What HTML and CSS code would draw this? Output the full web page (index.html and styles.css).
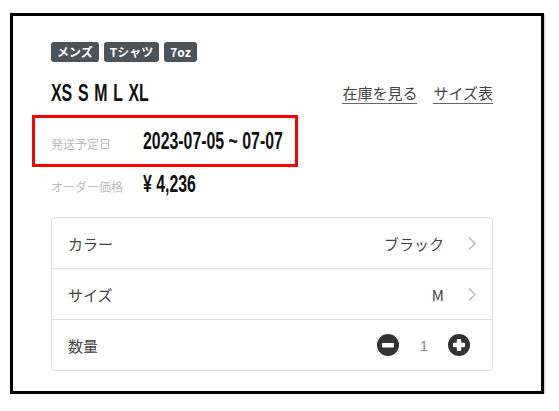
FILE: index.html
```html
<!DOCTYPE html>
<html lang="ja">
<head>
<meta charset="UTF-8">
<meta name="viewport" content="width=device-width, initial-scale=1.0">
<title>商品詳細</title>
<link rel="stylesheet" href="styles.css">
</head>
<body>
    <div class="card">
        <div class="tags">
            <span class="tag">メンズ</span>
            <span class="tag">Tシャツ</span>
            <span class="tag">7oz</span>
        </div>

        <div class="size-row">
            <div class="size-list">XS S M L XL</div>
            <div class="links">
                <a href="#" class="link">在庫を見る</a>
                <a href="#" class="link">サイズ表</a>
            </div>
        </div>

        <div class="info-row ship">
            <span class="info-label">発送予定日</span><span class="info-value">2023-07-05 ~ 07-07</span>
        </div>
        <div class="info-row">
            <span class="info-label">オーダー価格</span><span class="info-value">¥ 4,236</span>
        </div>

        <div class="options">
            <div class="option">
                <span class="option-label">カラー</span>
                <span class="option-value">ブラック</span>
                <svg class="chevron" width="10" height="15" viewBox="0 0 10 15"><polyline points="2,1.5 8,7.5 2,13.5" fill="none" stroke="#bbb" stroke-width="1.6"/></svg>
            </div>
            <div class="option">
                <span class="option-label">サイズ</span>
                <span class="option-value">M</span>
                <svg class="chevron" width="10" height="15" viewBox="0 0 10 15"><polyline points="2,1.5 8,7.5 2,13.5" fill="none" stroke="#bbb" stroke-width="1.6"/></svg>
            </div>
            <div class="option">
                <span class="option-label">数量</span>
                <div class="qty">
                    <svg class="qty-btn" width="22" height="22" viewBox="0 0 22 22"><circle cx="11" cy="11" r="11" fill="#333"/><rect x="5" y="9" width="12" height="4.4" rx="1" fill="#fff"/></svg>
                    <span class="qty-num">1</span>
                    <svg class="qty-btn" width="22" height="22" viewBox="0 0 22 22"><circle cx="11" cy="11" r="11" fill="#333"/><rect x="5" y="8.8" width="12" height="4.4" rx="1" fill="#fff"/><rect x="8.8" y="5" width="4.4" height="12" rx="1" fill="#fff"/></svg>
                </div>
            </div>
        </div>
    </div>
</body>
</html>
```

FILE: styles.css
```css
body {
    margin: 0;
    padding: 13px 0 0 10px;
    background-color: #fff;
    font-family: "Noto Sans CJK JP", sans-serif;
}

.card {
    box-sizing: border-box;
    width: 534px;
    height: 381px;
    border: 3px solid #000;
    box-shadow: 1px 1px 2px rgba(0, 0, 0, 0.25);
    padding: 26px 48px 0 38px;
}

.tags {
    display: flex;
    gap: 5px;
}

.tag {
    height: 20px;
    line-height: 20px;
    padding: 0 6px;
    border-radius: 3px;
    background-color: #4b535c;
    color: #fff;
    font-size: 12px;
    font-weight: bold;
}

.size-row {
    display: flex;
    justify-content: space-between;
    align-items: center;
    height: 43px;
    margin-top: 10px;
}

/* condensed numerals: no narrow face installed, so squeeze a bold sans */
.size-list,
.info-value {
    display: inline-block;
    white-space: nowrap;
    font-family: "Liberation Sans", "Noto Sans CJK JP", sans-serif;
    font-weight: bold;
    font-size: 23px;
    color: #111;
    transform: scaleX(0.69);
    transform-origin: left center;
}

.size-list {
    word-spacing: 2px;
}

.links {
    display: flex;
    gap: 16px;
}

.link {
    color: #444;
    font-size: 15px;
    line-height: 18px;
    text-decoration: none;
    border-bottom: 1px solid #666;
    padding-bottom: 1px;
}

.info-row {
    height: 34px;
    line-height: 34px;
    white-space: nowrap;
}

.info-row.ship {
    box-sizing: border-box;
    width: 266px;
    height: 52px;
    line-height: 46px;
    margin-left: -19px;
    padding-left: 16px;
    border: 3px solid #f00;
}

.info-label {
    display: inline-block;
    width: 92px;
    font-size: 12px;
    color: #bbb;
}

.options {
    margin-top: 16px;
    border: 1px solid #ddd;
    border-radius: 4px;
}

.option {
    display: flex;
    align-items: center;
    height: 50px;
    padding: 0 15px 0 16px;
}

.option + .option {
    border-top: 1px solid #ddd;
}

.option-label {
    flex: 1;
    font-size: 15px;
    color: #444;
}

.option-value {
    font-size: 15px;
    color: #444;
}

.chevron {
    margin-left: 23px;
}

.qty {
    display: flex;
    align-items: center;
    margin-right: 7px;
}

.qty-num {
    width: 22px;
    margin: 0 13px 0 14px;
    text-align: center;
    font-family: "Liberation Sans", sans-serif;
    font-size: 15px;
    color: #888;
}
```
